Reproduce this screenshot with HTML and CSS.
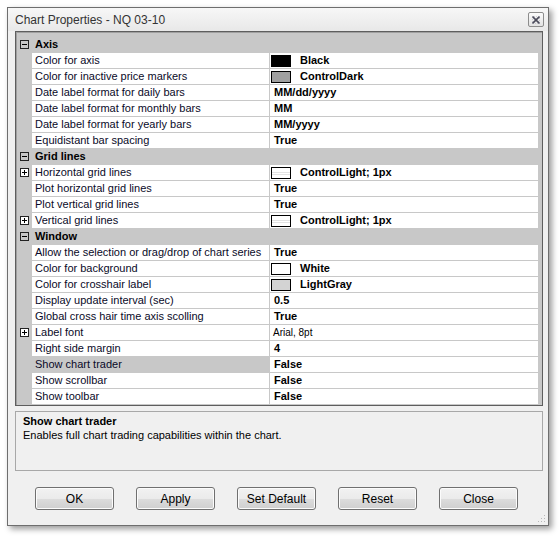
FILE: index.html
```html
<!DOCTYPE html>
<html>
<head>
<meta charset="utf-8">
<link rel="stylesheet" href="styles.css">
</head>
<body>
<div class="window">
  <div class="titlebar">
    <span class="title">Chart Properties - NQ 03-10</span>
    <span class="close"><svg width="8" height="8" viewBox="0 0 8 8"><path d="M0.5 0.5 L7.5 7.5 M7.5 0.5 L0.5 7.5" stroke="#4a4a5a" stroke-width="1.6"/><rect x="0" y="0" width="8" height="8" fill="none" stroke="#9a9aa8" stroke-width="0.8" stroke-dasharray="1 1"/></svg></span>
  </div>
  <div class="grid">
    <div class="cat"><span class="gutter"><svg class="tog" width="9" height="9" viewBox="0 0 9 9"><rect x="0.5" y="0.5" width="8" height="8" fill="none" stroke="#222"/><path d="M2 4.5 H7" stroke="#000"/></svg></span><span class="catname">Axis</span></div>
    <div class="row"><span class="gutter"></span><span class="name">Color for axis</span><span class="value"><span class="sw" style="background:#000"></span><span class="swtext">Black</span></span></div>
    <div class="row"><span class="gutter"></span><span class="name">Color for inactive price markers</span><span class="value"><span class="sw" style="background:#a0a0a0"></span><span class="swtext">ControlDark</span></span></div>
    <div class="row"><span class="gutter"></span><span class="name">Date label format for daily bars</span><span class="value">MM/dd/yyyy</span></div>
    <div class="row"><span class="gutter"></span><span class="name">Date label format for monthly bars</span><span class="value">MM</span></div>
    <div class="row"><span class="gutter"></span><span class="name">Date label format for yearly bars</span><span class="value">MM/yyyy</span></div>
    <div class="row"><span class="gutter"></span><span class="name">Equidistant bar spacing</span><span class="value">True</span></div>
    <div class="cat"><span class="gutter"><svg class="tog" width="9" height="9" viewBox="0 0 9 9"><rect x="0.5" y="0.5" width="8" height="8" fill="none" stroke="#222"/><path d="M2 4.5 H7" stroke="#000"/></svg></span><span class="catname">Grid lines</span></div>
    <div class="row"><span class="gutter"><svg class="tog" width="9" height="9" viewBox="0 0 9 9"><rect x="0.5" y="0.5" width="8" height="8" fill="#fff" stroke="#222"/><path d="M2 4.5 H7 M4.5 2 V7" stroke="#000"/></svg></span><span class="name">Horizontal grid lines</span><span class="value"><span class="sw sw-line"></span><span class="swtext">ControlLight; 1px</span></span></div>
    <div class="row"><span class="gutter"></span><span class="name">Plot horizontal grid lines</span><span class="value">True</span></div>
    <div class="row"><span class="gutter"></span><span class="name">Plot vertical grid lines</span><span class="value">True</span></div>
    <div class="row"><span class="gutter"><svg class="tog" width="9" height="9" viewBox="0 0 9 9"><rect x="0.5" y="0.5" width="8" height="8" fill="#fff" stroke="#222"/><path d="M2 4.5 H7 M4.5 2 V7" stroke="#000"/></svg></span><span class="name">Vertical grid lines</span><span class="value"><span class="sw sw-line"></span><span class="swtext">ControlLight; 1px</span></span></div>
    <div class="cat"><span class="gutter"><svg class="tog" width="9" height="9" viewBox="0 0 9 9"><rect x="0.5" y="0.5" width="8" height="8" fill="none" stroke="#222"/><path d="M2 4.5 H7" stroke="#000"/></svg></span><span class="catname">Window</span></div>
    <div class="row"><span class="gutter"></span><span class="name">Allow the selection or drag/drop of chart series</span><span class="value">True</span></div>
    <div class="row"><span class="gutter"></span><span class="name">Color for background</span><span class="value"><span class="sw" style="background:#fff"></span><span class="swtext">White</span></span></div>
    <div class="row"><span class="gutter"></span><span class="name">Color for crosshair label</span><span class="value"><span class="sw" style="background:#d3d3d3"></span><span class="swtext">LightGray</span></span></div>
    <div class="row"><span class="gutter"></span><span class="name">Display update interval (sec)</span><span class="value">0.5</span></div>
    <div class="row"><span class="gutter"></span><span class="name">Global cross hair time axis scolling</span><span class="value">True</span></div>
    <div class="row"><span class="gutter"><svg class="tog" width="9" height="9" viewBox="0 0 9 9"><rect x="0.5" y="0.5" width="8" height="8" fill="#fff" stroke="#222"/><path d="M2 4.5 H7 M4.5 2 V7" stroke="#000"/></svg></span><span class="name">Label font</span><span class="value plain">Arial, 8pt</span></div>
    <div class="row"><span class="gutter"></span><span class="name">Right side margin</span><span class="value">4</span></div>
    <div class="row"><span class="gutter"></span><span class="name selected">Show chart trader</span><span class="value">False</span></div>
    <div class="row"><span class="gutter"></span><span class="name">Show scrollbar</span><span class="value">False</span></div>
    <div class="row"><span class="gutter"></span><span class="name">Show toolbar</span><span class="value">False</span></div>
  </div>
  <div class="desc">
    <div class="desc-title">Show chart trader</div>
    <div class="desc-text">Enables full chart trading capabilities within the chart.</div>
  </div>
  <div class="buttons">
    <button class="btn">OK</button>
    <button class="btn">Apply</button>
    <button class="btn">Set Default</button>
    <button class="btn">Reset</button>
    <button class="btn">Close</button>
  </div>
  <svg class="grip" width="10" height="10" viewBox="0 0 10 10"><g fill="#b8b8b8"><rect x="8" y="2" width="1" height="1"/><rect x="5" y="5" width="1" height="1"/><rect x="8" y="5" width="1" height="1"/><rect x="2" y="8" width="1" height="1"/><rect x="5" y="8" width="1" height="1"/><rect x="8" y="8" width="1" height="1"/></g></svg>
</div>
</body>
</html>
```

FILE: styles.css
```css
html, body {
  margin: 0;
  padding: 0;
}
body {
  width: 560px;
  height: 539px;
  overflow: hidden;
  background: #ffffff;
  font-family: "Liberation Sans", Arial, sans-serif;
  font-size: 11px;
  color: #000;
}
.window {
  position: relative;
  margin: 7px 0 0 7px;
  width: 542px;
  height: 519px;
  box-sizing: border-box;
  border: 1px solid #6e6e6e;
  background: #f0f0f0;
  box-shadow: 3px 3px 6px rgba(0, 0, 0, 0.4);
  display: flex;
  flex-direction: column;
}
.titlebar {
  height: 23px;
  display: flex;
  align-items: center;
  padding-left: 7px;
  background: linear-gradient(#f7f7f7, #e8e8e8);
  font-size: 12px;
  color: #333;
}
.close {
  margin-left: auto;
  margin-right: 4px;
  width: 16px;
  height: 15px;
  box-sizing: border-box;
  border: 1px solid #8c8c8c;
  border-radius: 2px;
  background: linear-gradient(#fbfbfb, #e2e2e2);
  display: flex;
  align-items: center;
  justify-content: center;
}
.grid {
  margin: 0 5px 0 7px;
  border: 1px solid #5e5e5e;
  box-shadow: inset 1px 1px 0 #a0a0a0;
  background: #c8c8c8;
  padding: 5px 4px 0 0;
}
.row, .cat {
  display: flex;
  height: 16px;
}
.gutter {
  width: 16px;
  height: 15px;
  display: flex;
  align-items: center;
  justify-content: center;
  flex: none;
}
.tog {
  display: block;
  margin-left: 1px;
}
.catname {
  font-weight: bold;
  line-height: 15px;
  padding-left: 3px;
}
.name {
  width: 237px;
  height: 15px;
  line-height: 15px;
  box-sizing: border-box;
  padding-left: 3px;
  background: #fff;
  white-space: nowrap;
  overflow: hidden;
  color: #0a0a28;
}
.name.selected {
  background: #c8c8c8;
}
.value {
  margin-left: 1px;
  width: 268px;
  height: 15px;
  line-height: 15px;
  box-sizing: border-box;
  padding-left: 4px;
  background: #fff;
  font-weight: bold;
  display: flex;
  align-items: center;
  white-space: nowrap;
}
.value.plain {
  font-weight: normal;
  font-size: 10px;
  padding-left: 3px;
}
.sw {
  width: 20px;
  height: 12px;
  box-sizing: border-box;
  border: 1px solid #000;
  margin-left: -3px;
  flex: none;
}
.sw-line {
  background: linear-gradient(#fff 0, #fff 4px, #e3e3e3 4px, #e3e3e3 5px, #fff 5px, #fff 6px, #e3e3e3 6px, #e3e3e3 7px, #fff 7px);
}
.swtext {
  margin-left: 9px;
}
.desc {
  margin: 5px 5px 0 7px;
  height: 60px;
  box-sizing: border-box;
  border: 1px solid #a8a8a8;
  padding: 2px 7px 0 7px;
  line-height: 14px;
}
.desc-title {
  font-weight: bold;
}
.buttons {
  margin-top: 16px;
  display: flex;
  justify-content: center;
  gap: 22px;
  padding-right: 3px;
}
.btn {
  width: 79px;
  height: 23px;
  box-sizing: border-box;
  border: 1px solid #707070;
  border-radius: 3px;
  background: linear-gradient(#f2f2f2 0%, #ebebeb 50%, #dddddd 50%, #cfcfcf 100%);
  box-shadow: inset 0 0 0 1px #fcfcfc;
  font-family: "Liberation Sans", Arial, sans-serif;
  font-size: 12px;
  color: #000;
  padding: 0;
}
.grip {
  position: absolute;
  right: 2px;
  bottom: 2px;
}
```
